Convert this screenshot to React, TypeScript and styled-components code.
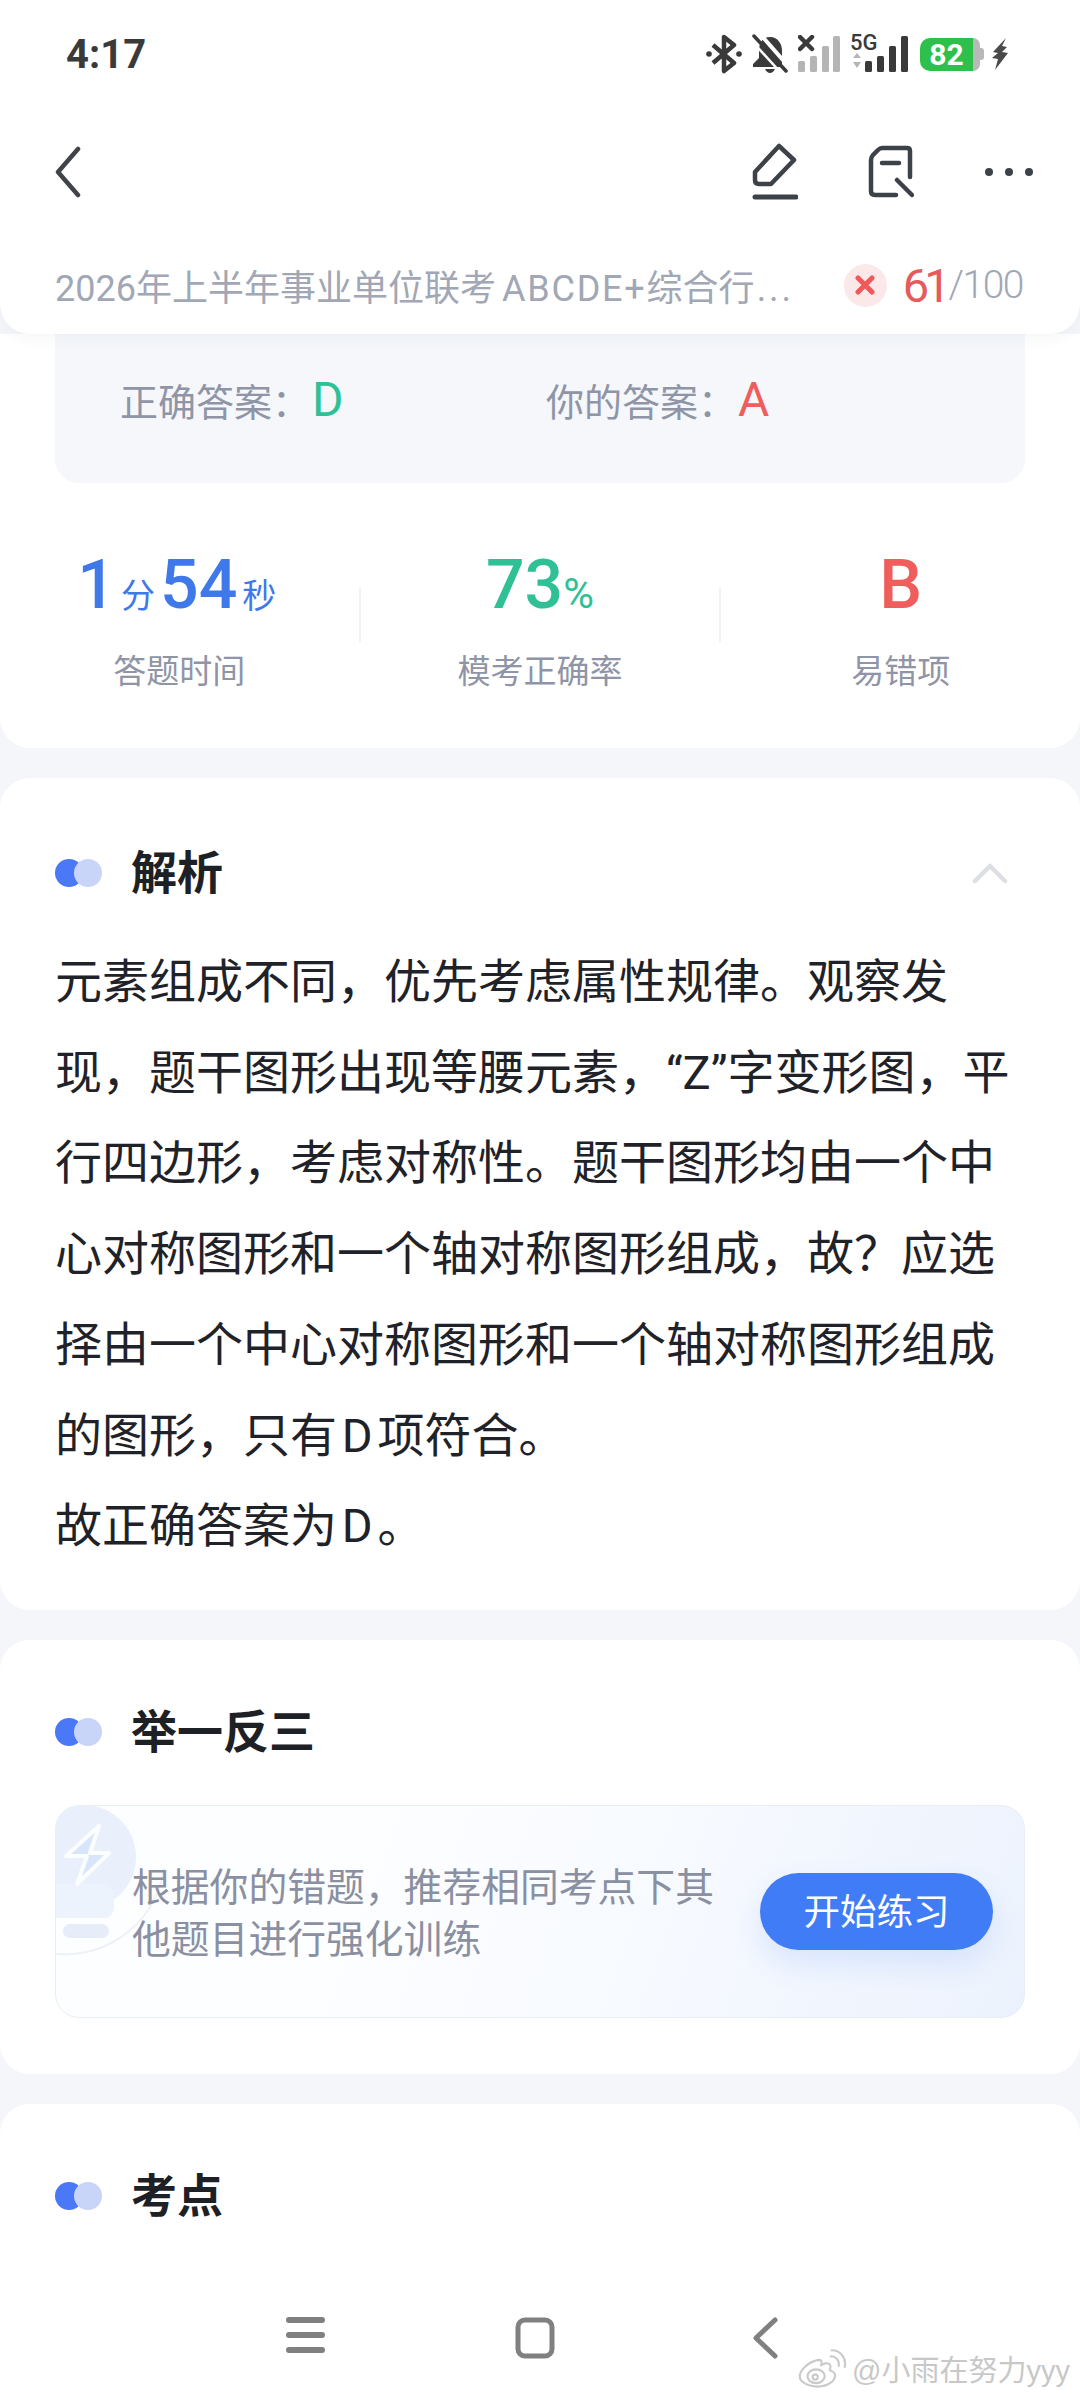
import React from 'react';
import styled, { createGlobalStyle } from 'styled-components';

const FONT = `Roboto, "Noto Sans CJK SC", sans-serif`;

const ANALYSIS_LINES = [
    '元素组成不同，优先考虑属性规律。观察发',
    '现，题干图形出现等腰元素，“Z”字变形图，平',
    '行四边形，考虑对称性。题干图形均由一个中',
    '心对称图形和一个轴对称图形组成，故？应选',
    '择由一个中心对称图形和一个轴对称图形组成',
    '的图形，只有\u200aD\u200a项符合。',
    '故正确答案为\u200aD\u200a。',
];

const GlobalStyle = createGlobalStyle`
    html, body {
        margin: 0;
        padding: 0;
        background: #f5f6fa;
    }
    * {
        box-sizing: border-box;
    }
`;

const Page = styled.div`
    position: relative;
    width: 1080px;
    height: 2400px;
    overflow: hidden;
    background: #f5f6fa;
    font-family: ${FONT};
`;

const Header = styled.header`
    position: relative;
    z-index: 2;
    height: 334px;
    background: #fff;
    border-radius: 0 0 30px 30px;
    box-shadow: 0 4px 14px rgba(60, 70, 100, 0.05);
`;

const StatusBar = styled.div`
    height: 108px;
    padding: 0 72px 0 66px;
    display: flex;
    align-items: center;
    justify-content: space-between;
`;

const Time = styled.span`
    font-size: 40px;
    font-weight: 700;
    color: #3a3a3a;
`;

const StatusIcons = styled.div`
    display: flex;
    align-items: center;
    gap: 10px;
`;

const Battery = styled.div`
    display: flex;
    align-items: center;
    height: 33px;
    margin: 0 -2px 0 2px;
`;

const BatteryLevel = styled.div`
    width: 53px;
    height: 33px;
    border-radius: 10px 0 0 10px;
    background: #2dc04b;
    color: #fff;
    font-size: 30px;
    font-weight: 700;
    line-height: 33px;
    text-align: center;
`;

const BatteryRest = styled.div`
    width: 7px;
    height: 33px;
    border-radius: 0 7px 7px 0;
    background: #b9b9b9;
`;

const BatteryTip = styled.div`
    width: 4px;
    height: 12px;
    border-radius: 0 3px 3px 0;
    background: #b9b9b9;
`;

const Signal5g = styled.svg`
    margin-top: -8px;
`;

const Toolbar = styled.div`
    height: 128px;
    padding: 0 46px 0 55px;
    display: flex;
    align-items: center;
    justify-content: space-between;
`;

const ToolGroup = styled.div`
    display: flex;
    align-items: center;
    gap: 70px;
`;

const ScoreRow = styled.div`
    height: 98px;
    padding: 0 57px 0 55px;
    display: flex;
    align-items: center;
    justify-content: space-between;
`;

const PaperTitle = styled.div`
    font-size: 36px;
    color: #a1a7b5;
    white-space: nowrap;
`;

const TitleLatin = styled.span`
    letter-spacing: 1.8px;
    margin-left: 6px;
`;

const TitleEllipsis = styled.span`
    letter-spacing: 3px;
    margin-left: 2px;
`;

const Score = styled.div`
    display: flex;
    align-items: center;
`;

const WrongBadge = styled.div`
    width: 43px;
    height: 43px;
    border-radius: 50%;
    background: #fbe8e8;
    display: flex;
    align-items: center;
    justify-content: center;
    margin-right: 16px;
`;

const ScoreValue = styled.span`
    font-size: 47px;
    letter-spacing: -5px;
    color: #e55a5a;
`;

const ScoreTotal = styled.span`
    font-size: 39px;
    font-weight: 300;
    letter-spacing: -1.5px;
    color: #a1a7b5;
    margin-left: 3px;
`;

const Card = styled.section`
    background: #fff;
    border-radius: 30px;
    margin-bottom: 30px;
`;

const SummaryCard = styled(Card)`
    border-radius: 0 0 30px 30px;
    padding-bottom: 56px;
`;

const AnswerBox = styled.div`
    margin: 0 55px;
    height: 149px;
    padding: 0 0 18px 65px;
    background: #f5f7fb;
    border-radius: 0 0 24px 24px;
    display: flex;
    align-items: center;
`;

const AnswerItem = styled.div`
    width: 426px;
    flex-shrink: 0;
    display: flex;
    align-items: center;
    font-size: 38px;
    color: #8f95a6;
`;

const AnswerLetter = styled.span<{ $color: string }>`
    font-size: 48px;
    color: ${(p) => p.$color};
    margin-left: 2px;
`;

const Stats = styled.div`
    display: flex;
    margin-top: 62px;
`;

const Stat = styled.div`
    flex: 1;
    display: flex;
    flex-direction: column;
    align-items: center;
`;

const StatValue = styled.div<{ $color: string }>`
    height: 80px;
    display: flex;
    align-items: baseline;
    justify-content: center;
    color: ${(p) => p.$color};
    font-size: 68px;
    font-weight: 500;
    line-height: 80px;
`;

const StatUnit = styled.span`
    font-size: 34px;
    font-weight: 400;
    margin: 0 5px;
`;

const StatPercent = styled.span`
    font-size: 42px;
    font-weight: 400;
`;

const StatLabel = styled.div`
    margin-top: 27px;
    height: 40px;
    line-height: 40px;
    font-size: 33px;
    color: #8f95a6;
`;

const StatDivider = styled.div`
    width: 2px;
    height: 55px;
    margin-top: 43px;
    background: #f1f2f5;
`;

const SectionHead = styled.div`
    height: 50px;
    display: flex;
    align-items: center;
    justify-content: space-between;
    padding: 0 72px 0 55px;
`;

const SectionTitleWrap = styled.div`
    display: flex;
    align-items: center;
    gap: 29px;
`;

const SectionTitle = styled.h2`
    margin: 0;
    font-size: 46px;
    font-weight: 600;
    line-height: 50px;
    color: #1d2024;
`;

const AnalysisCard = styled(Card)`
    padding: 70px 0 38px;
`;

const AnalysisBody = styled.div`
    margin-top: 39px;
    padding: 0 55px;
    font-size: 47px;
    line-height: 90.7px;
    color: #1f2329;
`;

const AnalysisLine = styled.div`
    white-space: nowrap;
`;

const PracticeCard = styled(Card)`
    padding: 67px 0 56px;
`;

const HintBox = styled.div`
    position: relative;
    overflow: hidden;
    margin: 48px 55px 0;
    height: 213px;
    border: 1px solid #e8edf6;
    border-radius: 24px;
    background: linear-gradient(110deg, #fdfeff 30%, #f7faff 60%, #ecf2fd 100%);
    padding: 0 31px 0 76px;
    display: flex;
    align-items: center;
    justify-content: space-between;
`;

const BulbArt = styled.svg`
    position: absolute;
    left: 0;
    top: 0;
`;

const HintText = styled.div`
    position: relative;
    width: 600px;
    padding-top: 5px;
    font-size: 38.8px;
    line-height: 52px;
    color: #8a90a1;
`;

const StartButton = styled.button`
    width: 233px;
    height: 77px;
    border: none;
    border-radius: 39px;
    padding: 0 0 3px;
    background: #3f7cf6;
    box-shadow: 0 14px 30px rgba(63, 124, 246, 0.14);
    color: #fff;
    font-family: ${FONT};
    font-size: 36.5px;
`;

const PointCard = styled(Card)`
    padding: 67px 0 200px;
    margin-bottom: 0;
`;

const NavBar = styled.nav`
    position: absolute;
    z-index: 3;
    left: 0;
    right: 0;
    bottom: 0;
    height: 130px;
    background: #fff;
    display: flex;
    align-items: flex-start;
    gap: 189px;
    padding: 47px 0 0 286px;
`;

const Watermark = styled.div`
    position: absolute;
    z-index: 4;
    right: 10px;
    bottom: 11px;
    display: flex;
    align-items: center;
    gap: 4px;
    font-size: 29px;
    color: #c8c8c8;
    text-shadow: 0 0 2px #fff;
    font-family: "Liberation Sans", "Noto Sans CJK SC", sans-serif;
`;

const Dots = () => (
    <svg width="47" height="28" viewBox="0 0 47 28">
        <circle cx="14" cy="14" r="14" fill="#4a78f6" />
        <circle cx="33" cy="14" r="14" fill="#c8d5f8" />
    </svg>
);

const BackIcon = () => (
    <svg width="26" height="52" viewBox="0 0 26 52" fill="none">
        <path d="M23 3 L3 26 L23 49" stroke="#404448" strokeWidth="4.5" strokeLinecap="round" strokeLinejoin="round" />
    </svg>
);

const PenIcon = () => (
    <svg width="46" height="58" viewBox="0 0 46 58" fill="none" stroke="#3c4248" strokeWidth="4.5" strokeLinecap="round" strokeLinejoin="round">
        <path d="M27 3 L42 17 L19 41 H7 Q3 41 3 37 V29 Z" />
        <path d="M3 54 H44" strokeWidth="5" />
    </svg>
);

const NoteIcon = () => (
    <svg width="46" height="54" viewBox="0 0 46 54" fill="none" stroke="#3c4248" strokeWidth="4.5" strokeLinecap="round" strokeLinejoin="round">
        <path d="M42 32 V6 Q42 3 39 3 H14 Q12 3 10 5 L5 10 Q3 12 3 15 V46 Q3 50 7 50 H28" />
        <path d="M14 18 H31" />
        <path d="M29 35 L44 50" />
    </svg>
);

const MoreIcon = () => (
    <svg width="50" height="10" viewBox="0 0 50 10" fill="#3c4248">
        <circle cx="5" cy="5" r="4" />
        <circle cx="25" cy="5" r="4" />
        <circle cx="45" cy="5" r="4" />
    </svg>
);

const BluetoothIcon = () => (
    <svg width="36" height="40" viewBox="0 0 36 40" fill="none">
        <path d="M7 11 L28 29 L18 37 V3 L28 11 L7 29" stroke="#3a3a3a" strokeWidth="4.5" strokeLinejoin="round" />
        <circle cx="3" cy="20" r="2.8" fill="#3a3a3a" />
        <circle cx="33" cy="20" r="2.8" fill="#3a3a3a" />
    </svg>
);

const BellOffIcon = () => (
    <svg width="36" height="40" viewBox="0 0 36 40">
        <path d="M18 3 C9 3 7 11 7 17 V24 L1 30 V33 H30 V29 L30 17 C30 10 26 3 18 3 Z" fill="#3a3a3a" />
        <path d="M13 35 H23 Q21 39 18 39 Q15 39 13 35 Z" fill="#3a3a3a" />
        <path d="M8 0 L38 34" stroke="#fff" strokeWidth="4" />
        <path d="M2 2 L34 37" stroke="#3a3a3a" strokeWidth="3.5" strokeLinecap="round" />
        <path d="M-2 5 L30 40" stroke="#fff" strokeWidth="2.5" />
    </svg>
);

const SignalOffIcon = () => (
    <svg width="42" height="38" viewBox="0 0 42 38">
        <path d="M2 2 L14 14 M14 2 L2 14" stroke="#3a3a3a" strokeWidth="4.5" strokeLinecap="round" />
        <rect x="0" y="26" width="7" height="11" rx="1.5" fill="#b5b5b5" />
        <rect x="12" y="21" width="7" height="16" rx="1.5" fill="#b5b5b5" />
        <rect x="24" y="11" width="7" height="26" rx="1.5" fill="#b5b5b5" />
        <rect x="35" y="1" width="7" height="36" rx="1.5" fill="#b5b5b5" />
    </svg>
);

const Signal5gIcon = () => (
    <Signal5g width="58" height="46" viewBox="0 -8 58 46">
        <text x="0" y="15" fontSize="22" fontWeight="500" fontFamily="Roboto, sans-serif" fill="#3a3a3a">5G</text>
        <path d="M3 23 L7 18 L11 23 Z M3 27 H11 L7 33 Z" fill="#b5b5b5" />
        <rect x="15" y="26" width="7" height="11" rx="1.5" fill="#3a3a3a" />
        <rect x="27" y="21" width="7" height="16" rx="1.5" fill="#3a3a3a" />
        <rect x="39" y="11" width="7" height="26" rx="1.5" fill="#3a3a3a" />
        <rect x="51" y="1" width="7" height="36" rx="1.5" fill="#3a3a3a" />
    </Signal5g>
);

const BoltIcon = () => (
    <svg width="16" height="32" viewBox="0 0 16 32">
        <path d="M14 0 L1 14 L6 15 L0 20 L6 21 L3 32 L16 15 L10 14 L15 9 L10 8 Z" fill="#4a4a4a" />
    </svg>
);

const CrossIcon = () => (
    <svg width="20" height="20" viewBox="0 0 20 20">
        <path d="M3 3 L17 17 M17 3 L3 17" stroke="#f0585a" strokeWidth="5" strokeLinecap="round" />
    </svg>
);

const ChevronUp = () => (
    <svg width="36" height="22" viewBox="0 0 36 22" fill="none">
        <path d="M3 19 L18 4 L33 19" stroke="#dcdfe3" strokeWidth="4.5" strokeLinecap="round" strokeLinejoin="round" />
    </svg>
);

const Bulb = () => (
    <BulbArt width="130" height="160" viewBox="0 0 130 160">
        <path d="M108 62 A100 100 0 0 1 0 148" fill="none" stroke="#ecf1fa" strokeWidth="2" />
        <circle cx="28" cy="51" r="52" fill="#e9f0fc" />
        <rect x="-10" y="78" width="68" height="34" rx="10" fill="#edf3fc" />
        <rect x="7" y="118" width="46" height="14" rx="7" fill="#e6edf9" />
        <path d="M43 20 L10 50 H31 L21 78 L53 47 H34 Z" fill="#d8e5fb" stroke="#fbfdff" strokeWidth="4" strokeLinejoin="round" />
    </BulbArt>
);

const NavMenu = () => (
    <svg width="40" height="36" viewBox="0 0 40 36" fill="#808080">
        <rect x="0" y="0" width="39" height="6" rx="3" />
        <rect x="0" y="15" width="39" height="6" rx="3" />
        <rect x="0" y="30" width="39" height="6" rx="3" />
    </svg>
);

const NavHome = () => (
    <svg width="48" height="42" viewBox="0 0 48 42" fill="none">
        <rect x="3" y="3" width="34" height="36" rx="7" stroke="#808080" strokeWidth="5" />
    </svg>
);

const NavBack = () => (
    <svg width="26" height="42" viewBox="0 0 26 42" fill="none">
        <path d="M23 3 L4 21 L23 39" stroke="#808080" strokeWidth="5" strokeLinecap="round" strokeLinejoin="round" />
    </svg>
);

const WeiboLogo = () => (
    <svg width="50" height="39" viewBox="0 0 58 44" fill="none" stroke="#c9c9c9" strokeWidth="2.4">
        <path d="M24 12 C12 14 2 24 2 31 C2 38 12 43 23 43 C35 43 43 36 43 30 C43 26 39 25 37 24 C39 19 37 15 32 16 L27 18 C28 13 27 12 24 12 Z" fill="#fff" />
        <ellipse cx="21" cy="31" rx="10" ry="8" />
        <circle cx="20" cy="32" r="3" />
        <path d="M37 8 C43 7 49 12 47 20" />
        <path d="M38 1 C48 0 57 9 54 21" />
    </svg>
);

const App = () => (
    <Page>
        <GlobalStyle />
        <Header>
            <StatusBar>
                <Time>4:17</Time>
                <StatusIcons>
                    <BluetoothIcon />
                    <BellOffIcon />
                    <SignalOffIcon />
                    <Signal5gIcon />
                    <Battery>
                        <BatteryLevel>82</BatteryLevel>
                        <BatteryRest />
                        <BatteryTip />
                    </Battery>
                    <BoltIcon />
                </StatusIcons>
            </StatusBar>
            <Toolbar>
                <BackIcon />
                <ToolGroup>
                    <PenIcon />
                    <NoteIcon />
                    <MoreIcon />
                </ToolGroup>
            </Toolbar>
            <ScoreRow>
                <PaperTitle>
                    2026年上半年事业单位联考<TitleLatin>ABCDE+</TitleLatin>综合行<TitleEllipsis>...</TitleEllipsis>
                </PaperTitle>
                <Score>
                    <WrongBadge>
                        <CrossIcon />
                    </WrongBadge>
                    <ScoreValue>61</ScoreValue>
                    <ScoreTotal>/100</ScoreTotal>
                </Score>
            </ScoreRow>
        </Header>

        <SummaryCard>
            <AnswerBox>
                <AnswerItem>
                    正确答案：<AnswerLetter $color="#2fc096">D</AnswerLetter>
                </AnswerItem>
                <AnswerItem>
                    你的答案：<AnswerLetter $color="#ef5d5d">A</AnswerLetter>
                </AnswerItem>
            </AnswerBox>
            <Stats>
                <Stat>
                    <StatValue $color="#3f78e8">
                        1<StatUnit>分</StatUnit>54<StatUnit>秒</StatUnit>
                    </StatValue>
                    <StatLabel>答题时间</StatLabel>
                </Stat>
                <StatDivider />
                <Stat>
                    <StatValue $color="#2fc096">
                        73<StatPercent>%</StatPercent>
                    </StatValue>
                    <StatLabel>模考正确率</StatLabel>
                </Stat>
                <StatDivider />
                <Stat>
                    <StatValue $color="#ef5d5d">B</StatValue>
                    <StatLabel>易错项</StatLabel>
                </Stat>
            </Stats>
        </SummaryCard>

        <AnalysisCard>
            <SectionHead>
                <SectionTitleWrap>
                    <Dots />
                    <SectionTitle>解析</SectionTitle>
                </SectionTitleWrap>
                <ChevronUp />
            </SectionHead>
            <AnalysisBody>
                {ANALYSIS_LINES.map((line) => (
                    <AnalysisLine key={line}>{line}</AnalysisLine>
                ))}
            </AnalysisBody>
        </AnalysisCard>

        <PracticeCard>
            <SectionHead>
                <SectionTitleWrap>
                    <Dots />
                    <SectionTitle>举一反三</SectionTitle>
                </SectionTitleWrap>
            </SectionHead>
            <HintBox>
                <Bulb />
                <HintText>根据你的错题，推荐相同考点下其他题目进行强化训练</HintText>
                <StartButton>开始练习</StartButton>
            </HintBox>
        </PracticeCard>

        <PointCard>
            <SectionHead>
                <SectionTitleWrap>
                    <Dots />
                    <SectionTitle>考点</SectionTitle>
                </SectionTitleWrap>
            </SectionHead>
        </PointCard>

        <NavBar>
            <NavMenu />
            <NavHome />
            <NavBack />
        </NavBar>
        <Watermark>
            <WeiboLogo />
            @小雨在努力yyy
        </Watermark>
    </Page>
);

export default App;
